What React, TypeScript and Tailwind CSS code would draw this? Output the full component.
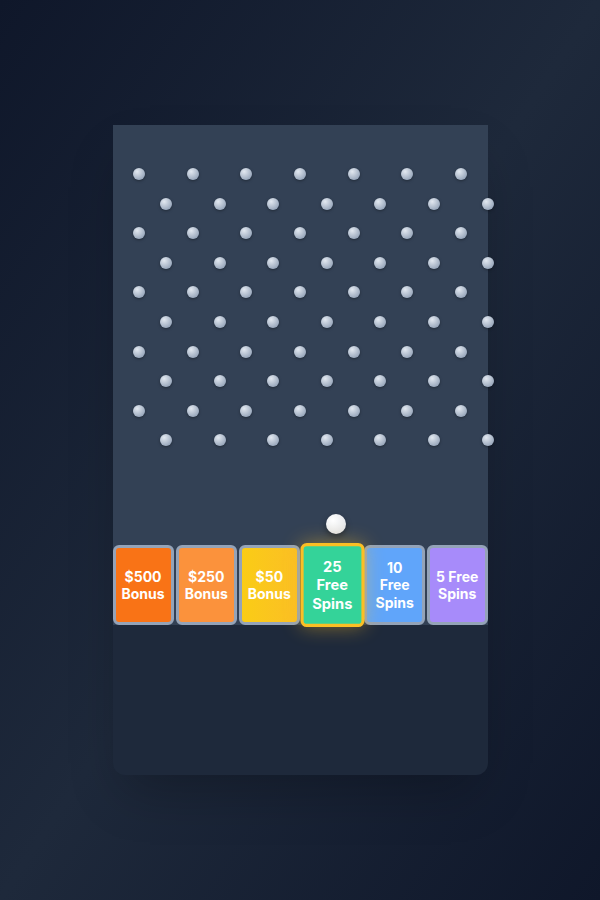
import React from "react";

const ROWS = 10;
const COLS = 7;
const BOARD_W = 375;

const prizes = [
  { label: "$500 Bonus", color: "bg-[#f97316]" },
  { label: "$250 Bonus", color: "bg-[#fb923c]" },
  { label: "$50 Bonus", color: "bg-gradient-to-r from-[#facc15] to-[#fbbf24]" },
  { label: "25 Free Spins", color: "bg-[#34d399]", active: true },
  { label: "10 Free Spins", color: "bg-[#60a5fa]" },
  { label: "5 Free Spins", color: "bg-[#a78bfa]" },
];

function Pegs() {
  const pegs: { x: number; y: number }[] = [];
  for (let r = 0; r < ROWS; r++) {
    for (let c = 0; c < COLS; c++) {
      const x = r % 2 === 0 ? ((c + 0.5) / COLS) * BOARD_W : ((c + 1) / COLS) * BOARD_W;
      const y = 49.2 + r * 29.55;
      pegs.push({ x, y });
    }
  }
  return (
    <>
      {pegs.map((p, i) => (
        <div
          key={i}
          className="absolute w-3 h-3 -ml-1.5 -mt-1.5 rounded-full bg-[radial-gradient(circle_at_35%_30%,#e2e8f0,#94a3b8_80%)] shadow-[0_1px_3px_rgba(0,0,0,0.35)]"
          style={{ left: p.x, top: p.y }}
        />
      ))}
    </>
  );
}

export default function App() {
  return (
    <div className="h-[900px] w-full flex items-center justify-center bg-gradient-to-br from-[#0f172a] via-[#1e293b] to-[#0f172a] font-['Inter',sans-serif]">
      <div className="w-[375px] h-[650px] rounded-xl bg-[#1e293b] shadow-2xl flex flex-col">
        <div className="relative h-[500px] bg-[#334155] flex flex-col">
          <div className="relative flex-1">
            <Pegs />
            <div className="absolute left-[213.5px] top-[389px] w-5 h-5 rounded-full bg-[radial-gradient(circle_at_35%_30%,#ffffff,#e5e7eb_70%)] shadow-[0_3px_6px_rgba(0,0,0,0.4)]" />
          </div>
          <div className="h-20 flex gap-[2px]">
            {prizes.map((p) => (
              <div
                key={p.label}
                className={`flex-1 rounded-md border-[3px] flex items-center justify-center text-center px-1.5 text-white font-bold text-sm leading-tight ${p.color} ${
                  p.active
                    ? "border-[#fbbf24] scale-105 shadow-[0_0_18px_rgba(251,191,36,0.45)]"
                    : "border-[#94a3b8]"
                }`}
              >
                {p.label}
              </div>
            ))}
          </div>
        </div>
      </div>
    </div>
  );
}
